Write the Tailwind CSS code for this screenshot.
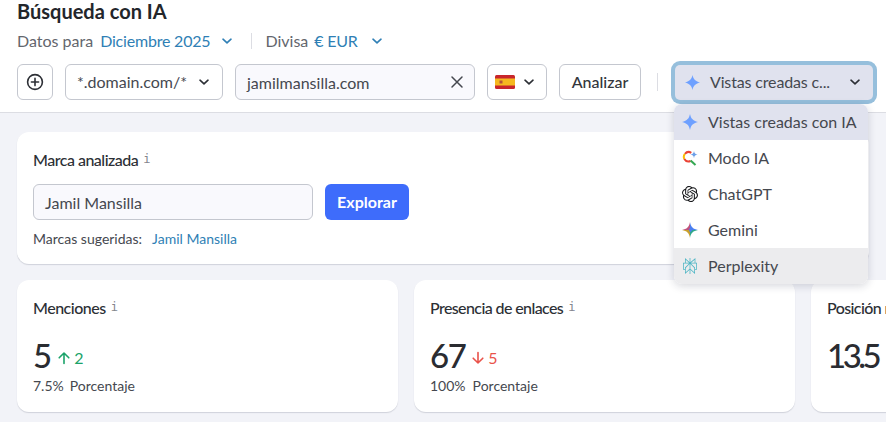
<!DOCTYPE html>
<html lang="es">
<head>
    <meta charset="UTF-8">
    <meta name="viewport" content="width=device-width, initial-scale=1.0">
    <title>Búsqueda con IA</title>
    <script src="https://cdn.jsdelivr.net/npm/@tailwindcss/browser@4"></script>
</head>
<body class="relative w-[886px] h-[422px] overflow-hidden bg-[#f2f3f8] text-[#45484f] font-['Lato',sans-serif]">

    <!-- Cabecera -->
    <header class="h-[113px] bg-white border-b border-[#dcdde3] pl-[17px]">
        <h1 class="h-[23px] text-[20px] leading-[23px] font-bold text-[#23262b]">Búsqueda con IA</h1>

        <div class="mt-[7px] h-[22px] flex items-center text-[16px] leading-[22px]">
            <span class="text-[#63666d]">Datos para</span>
            <span class="ml-[7px] tracking-[-0.2px] text-[#2f7fb5]">Diciembre 2025</span>
            <svg class="ml-[11px] w-[12px] h-[12px] text-[#2f7fb5]" viewBox="0 0 12 12" fill="none" stroke="currentColor" stroke-width="1.6" stroke-linecap="round" stroke-linejoin="round"><path d="M2 4.2 6 7.8 10 4.2"/></svg>
            <span class="ml-[18px] w-px h-[16px] bg-[#dcdde3]"></span>
            <span class="ml-[13px] text-[#63666d]">Divisa</span>
            <span class="ml-[6px] tracking-[-0.2px] text-[#2f7fb5]">€ EUR</span>
            <svg class="ml-[13px] w-[12px] h-[12px] text-[#2f7fb5]" viewBox="0 0 12 12" fill="none" stroke="currentColor" stroke-width="1.6" stroke-linecap="round" stroke-linejoin="round"><path d="M2 4.2 6 7.8 10 4.2"/></svg>
        </div>

        <div class="mt-[12px] flex items-center h-[36px] text-[16px]">
            <button class="w-[36px] h-[36px] flex items-center justify-center rounded-md border border-[#c4c7cf] bg-white">
                <svg class="w-[18px] h-[18px] text-[#2c2f35]" viewBox="0 0 18 18" fill="none" stroke="currentColor" stroke-width="1.6" stroke-linecap="round"><circle cx="9" cy="9" r="7.4"/><path d="M9 5.4v7.2M5.4 9h7.2"/></svg>
            </button>
            <button class="ml-[12px] w-[158px] h-[36px] pl-[11px] pr-[12px] flex items-center justify-between rounded-md border border-[#c4c7cf] bg-white">
                <span>*.domain.com/*</span>
                <svg class="w-[12px] h-[12px] text-[#2c2f35]" viewBox="0 0 12 12" fill="none" stroke="currentColor" stroke-width="1.6" stroke-linecap="round" stroke-linejoin="round"><path d="M2 4.2 6 7.8 10 4.2"/></svg>
            </button>
            <div class="ml-[12px] w-[240px] h-[36px] pl-[11px] pr-[10px] flex items-center justify-between rounded-md border border-[#c4c7cf] bg-[#f9f9fd]">
                <span class="pt-[2px]">jamilmansilla.com</span>
                <svg class="w-[14px] h-[14px] text-[#45484f]" viewBox="0 0 14 14" fill="none" stroke="currentColor" stroke-width="1.5" stroke-linecap="round"><path d="M2 2l10 10M12 2 2 12"/></svg>
            </div>
            <button class="ml-[12px] w-[60px] h-[36px] pl-[7px] flex items-center rounded-md border border-[#c4c7cf] bg-white">
                <svg class="w-[20px] h-[14px]" viewBox="0 0 20 14"><rect width="20" height="14" rx="1.5" fill="#c8262c"/><rect y="3.5" width="20" height="7" fill="#f5b81f"/><rect x="4.5" y="5.5" width="3" height="3" fill="#b5523a"/></svg>
                <svg class="ml-[8px] w-[12px] h-[12px] text-[#2c2f35]" viewBox="0 0 12 12" fill="none" stroke="currentColor" stroke-width="1.6" stroke-linecap="round" stroke-linejoin="round"><path d="M2 4.2 6 7.8 10 4.2"/></svg>
            </button>
            <button class="ml-[12px] w-[82px] h-[36px] flex items-center justify-center rounded-md border border-[#c4c7cf] bg-white font-medium text-[#33363c]">Analizar</button>
            <span class="ml-[16px] w-px h-[18px] bg-[#dcdde3]"></span>
            <button class="ml-[17px] w-[198px] h-[35px] pl-[10px] pr-[12px] flex items-center rounded-[5px] bg-[#e0e2ee] ring-4 ring-[#96bfdc]">
                <svg class="w-[15px] h-[15px] text-[#6ea0ff]" viewBox="0 0 16 16" fill="currentColor"><path d="M8 0c1 4.600 2.600 6.400 8 8-5.400 1.600-7 3.400-8 8-1-4.600-2.600-6.400-8-8 5.400-1.600 7-3.400 8-8Z"/></svg>
                <span class="ml-[10px] flex-1 text-left tracking-[-0.15px]">Vistas creadas c...</span>
                <svg class="w-[12px] h-[12px] text-[#2c2f35]" viewBox="0 0 12 12" fill="none" stroke="currentColor" stroke-width="1.6" stroke-linecap="round" stroke-linejoin="round"><path d="M2 4.2 6 7.8 10 4.2"/></svg>
            </button>
        </div>
    </header>

    <main class="pt-[19px] pl-[17px] pr-[17px]">
        <!-- Marca analizada -->
        <section class="h-[132px] bg-white rounded-xl shadow-[0_1px_1px_rgba(30,35,60,0.16)] pt-[18px] pl-[16px]">
            <div class="flex items-start h-[20px]">
                <h2 class="text-[16px] leading-[20px] font-medium tracking-[-0.5px] text-[#2c2f35]">Marca analizada</h2>
                <span class="ml-[5px] font-['DejaVu_Sans_Mono',monospace] text-[12px] leading-[18px] text-[#83868d]">i</span>
            </div>
            <div class="mt-[14px] flex items-center">
                <div class="w-[280px] h-[36px] pl-[11px] pt-[1px] flex items-center rounded-md border border-[#c4c7cf] bg-[#f9f9fd] text-[16px]">Jamil Mansilla</div>
                <button class="ml-[12px] w-[84px] h-[36px] rounded-md bg-[#3e6cfb] text-white text-[16px] font-bold">Explorar</button>
            </div>
            <p class="mt-[9px] text-[14px] leading-[19px]">Marcas sugeridas:<span class="ml-[10px] text-[#2f7fb5]">Jamil Mansilla</span></p>
        </section>

        <!-- Tarjetas -->
        <div class="mt-[16px] flex gap-[16px] w-[900px]">
            <section class="w-[381px] h-[132px] shrink-0 bg-white rounded-xl shadow-[0_1px_1px_rgba(30,35,60,0.16)] pt-[18px] pl-[16px]">
                <div class="flex items-start h-[20px]">
                    <h2 class="text-[16px] leading-[20px] font-medium tracking-[-0.5px] text-[#2c2f35]">Menciones</h2>
                    <span class="ml-[5px] font-['DejaVu_Sans_Mono',monospace] text-[12px] leading-[18px] text-[#83868d]">i</span>
                </div>
                <div class="mt-[20px] h-[34px] flex items-center">
                    <span class="text-[33px] leading-[34px] font-medium text-[#2a2c31]">5</span>
                    <svg class="ml-[5px] mt-[6px] w-[14px] h-[14px] text-[#1ba36a]" viewBox="0 0 14 14" fill="none" stroke="currentColor" stroke-width="1.6" stroke-linecap="round" stroke-linejoin="round"><path d="M7 12.500V2M2.200 6.800 7 2l4.800 4.800"/></svg>
                    <span class="ml-[3px] mt-[6px] text-[16px] text-[#1ba36a]">2</span>
                </div>
                <p class="mt-[4px] text-[14px] leading-[19px]">7.5%<span class="ml-[6px]">Porcentaje</span></p>
            </section>
            <section class="w-[381px] h-[132px] shrink-0 bg-white rounded-xl shadow-[0_1px_1px_rgba(30,35,60,0.16)] pt-[18px] pl-[16px]">
                <div class="flex items-start h-[20px]">
                    <h2 class="text-[16px] leading-[20px] font-medium tracking-[-0.6px] text-[#2c2f35]">Presencia de enlaces</h2>
                    <span class="ml-[5px] font-['DejaVu_Sans_Mono',monospace] text-[12px] leading-[18px] text-[#83868d]">i</span>
                </div>
                <div class="mt-[20px] h-[34px] flex items-center">
                    <span class="text-[33px] leading-[34px] font-medium tracking-[-1.5px] text-[#2a2c31]">67</span>
                    <svg class="ml-[6px] mt-[6px] w-[14px] h-[14px] text-[#e9524a]" viewBox="0 0 14 14" fill="none" stroke="currentColor" stroke-width="1.6" stroke-linecap="round" stroke-linejoin="round"><path d="M7 1.500V12M2.200 7.200 7 12l4.800-4.800"/></svg>
                    <span class="ml-[3px] mt-[6px] text-[16px] text-[#e9524a]">5</span>
                </div>
                <p class="mt-[4px] text-[14px] leading-[19px]">100%<span class="ml-[7px]">Porcentaje</span></p>
            </section>
            <section class="w-[381px] h-[132px] shrink-0 bg-white rounded-xl shadow-[0_1px_1px_rgba(30,35,60,0.16)] pt-[18px] pl-[16px]">
                <h2 class="h-[20px] text-[16px] leading-[20px] font-medium tracking-[-0.6px] text-[#2c2f35]">Posición media</h2>
                <div class="mt-[20px] h-[34px] flex items-center">
                    <span class="text-[33px] leading-[34px] font-medium tracking-[-3.5px] text-[#2a2c31]">13.5</span>
                </div>
            </section>
        </div>
    </main>

    <!-- Menú desplegable -->
    <ul class="absolute left-[674px] top-[104px] w-[194px] rounded-lg overflow-hidden bg-white shadow-[0_2px_8px_rgba(30,35,60,0.18)] text-[16px]">
        <li class="h-[36px] pl-[8px] flex items-center bg-[#e0e2ee]">
            <svg class="w-[16px] h-[16px] text-[#6ea0ff]" viewBox="0 0 16 16" fill="currentColor"><path d="M8 0c1 4.600 2.600 6.400 8 8-5.400 1.600-7 3.400-8 8-1-4.600-2.600-6.400-8-8 5.400-1.600 7-3.400 8-8Z"/></svg>
            <span class="ml-[10px]">Vistas creadas con IA</span>
        </li>
        <li class="h-[36px] pl-[8px] flex items-center">
            <svg class="w-[16px] h-[16px]" viewBox="0 0 16 16" fill="none" stroke-width="2" stroke-linecap="butt">
                <path d="M9.300 2.800A5 5 0 0 0 2.900 3.800" stroke="#ea4335"/>
                <path d="M2.900 3.800A5 5 0 0 0 2.300 9" stroke="#fbbc04"/>
                <path d="M2.300 9A5 5 0 0 0 8.600 11" stroke="#ea4335"/>
                <path d="M8.600 10.400 13.500 15" stroke="#34a853"/>
                <path d="M12 1c.4 2.300 1.300 3.200 3.600 3.600-2.300.4-3.200 1.300-3.600 3.600-.4-2.300-1.300-3.200-3.600-3.600 2.300-.4 3.200-1.300 3.600-3.600Z" fill="#6ea0e8"/>
            </svg>
            <span class="ml-[10px]">Modo IA</span>
        </li>
        <li class="h-[36px] pl-[8px] flex items-center">
            <svg class="w-[16px] h-[16px]" viewBox="0 0 24 24" fill="#17181b"><path d="M22.2819 9.8211a5.9847 5.9847 0 0 0-.5157-4.9108 6.0462 6.0462 0 0 0-6.5098-2.9A6.0651 6.0651 0 0 0 4.9807 4.1818a5.9847 5.9847 0 0 0-3.9977 2.9 6.0462 6.0462 0 0 0 .7427 7.0966 5.98 5.98 0 0 0 .511 4.9107 6.051 6.051 0 0 0 6.5146 2.9001A5.9847 5.9847 0 0 0 13.2599 24a6.0557 6.0557 0 0 0 5.7718-4.2058 5.9894 5.9894 0 0 0 3.9977-2.9001 6.0557 6.0557 0 0 0-.7475-7.0729zm-9.022 12.6081a4.4755 4.4755 0 0 1-2.8764-1.0408l.1419-.0804 4.7783-2.7582a.7948.7948 0 0 0 .3927-.6813v-6.7369l2.02 1.1686a.071.071 0 0 1 .038.052v5.5826a4.504 4.504 0 0 1-4.4945 4.4944zm-9.6607-4.1254a4.4708 4.4708 0 0 1-.5346-3.0137l.142.0852 4.783 2.7582a.7712.7712 0 0 0 .7806 0l5.8428-3.3685v2.3324a.0804.0804 0 0 1-.0332.0615L9.74 19.9502a4.4992 4.4992 0 0 1-6.1408-1.6464zM2.3408 7.8956a4.485 4.485 0 0 1 2.3655-1.9728V11.6a.7664.7664 0 0 0 .3879.6765l5.8144 3.3543-2.0201 1.1685a.0757.0757 0 0 1-.071 0l-4.8303-2.7865A4.504 4.504 0 0 1 2.3408 7.872zm16.5963 3.8558L13.1038 8.364 15.1192 7.2a.0757.0757 0 0 1 .071 0l4.8303 2.7913a4.4944 4.4944 0 0 1-.6765 8.1042v-5.6772a.79.79 0 0 0-.407-.667zm2.0107-3.0231l-.142-.0852-4.7735-2.7818a.7759.7759 0 0 0-.7854 0L9.409 9.2297V6.8974a.0662.0662 0 0 1 .0284-.0615l4.8303-2.7866a4.4992 4.4992 0 0 1 6.6802 4.66zM8.3065 12.863l-2.02-1.1638a.0804.0804 0 0 1-.038-.0567V6.0742a4.4992 4.4992 0 0 1 7.3757-3.4537l-.142.0805L8.704 5.459a.7948.7948 0 0 0-.3927.6813zm1.0976-2.3654l2.602-1.4998 2.6069 1.4998v2.9994l-2.5974 1.4997-2.6067-1.4997Z"/></svg>
            <span class="ml-[10px]">ChatGPT</span>
        </li>
        <li class="h-[36px] pl-[8px] flex items-center">
            <!-- estrella en cuatro cuartos -->
            <svg class="w-[16px] h-[16px]" viewBox="0 0 16 16">
                <path d="M8 0C7.200 4.800 4.800 7.200 0 8h8Z" fill="#c0527c"/>
                <path d="M8 0c.8 4.800 3.200 7.200 8 8H8Z" fill="#4a7ff0"/>
                <path d="M0 8c4.800.8 7.200 3.200 8 8V8Z" fill="#c9a02e"/>
                <path d="M16 8c-4.800.8-7.200 3.200-8 8V8Z" fill="#2fa98a"/>
                <path d="M8 5.500 10.500 8 8 10.500 7 8Z" fill="#4a7ff0"/>
            </svg>
            <span class="ml-[10px]">Gemini</span>
        </li>
        <li class="h-[36px] pl-[8px] flex items-center bg-[#ececee]">
            <svg class="w-[16px] h-[16px]" viewBox="0 0 24 24" fill="#4fb6c4"><path d="M22.3977 7.0896h-2.3106V.0676l-7.5094 6.3542V.1577h-1.1554v6.1966L4.4904 0v7.0896H1.6023v10.3976h2.8882V24l6.932-6.3591v6.2005h1.1554v-6.0469l6.9318 6.1807v-6.4879h2.8882V7.0896zm-3.4657-4.531v4.531h-5.355l5.355-4.531zm-13.2862.0676 4.8691 4.4634H5.6458V2.6262zM2.7576 16.332V8.245h7.8476l-6.1149 6.1147v1.9723H2.7576zm2.8882 5.0404v-3.8852h.0001v-2.6488l5.7763-5.7764v7.0111l-5.7764 5.2993zm12.7086.0248-5.7766-5.1509V9.0618l5.7766 5.7766v6.5588zm2.8882-5.0652h-1.733v-1.9723L13.3948 8.245h7.8478v8.0872z"/></svg>
            <span class="ml-[10px]">Perplexity</span>
        </li>
    </ul>
</body>
</html>
